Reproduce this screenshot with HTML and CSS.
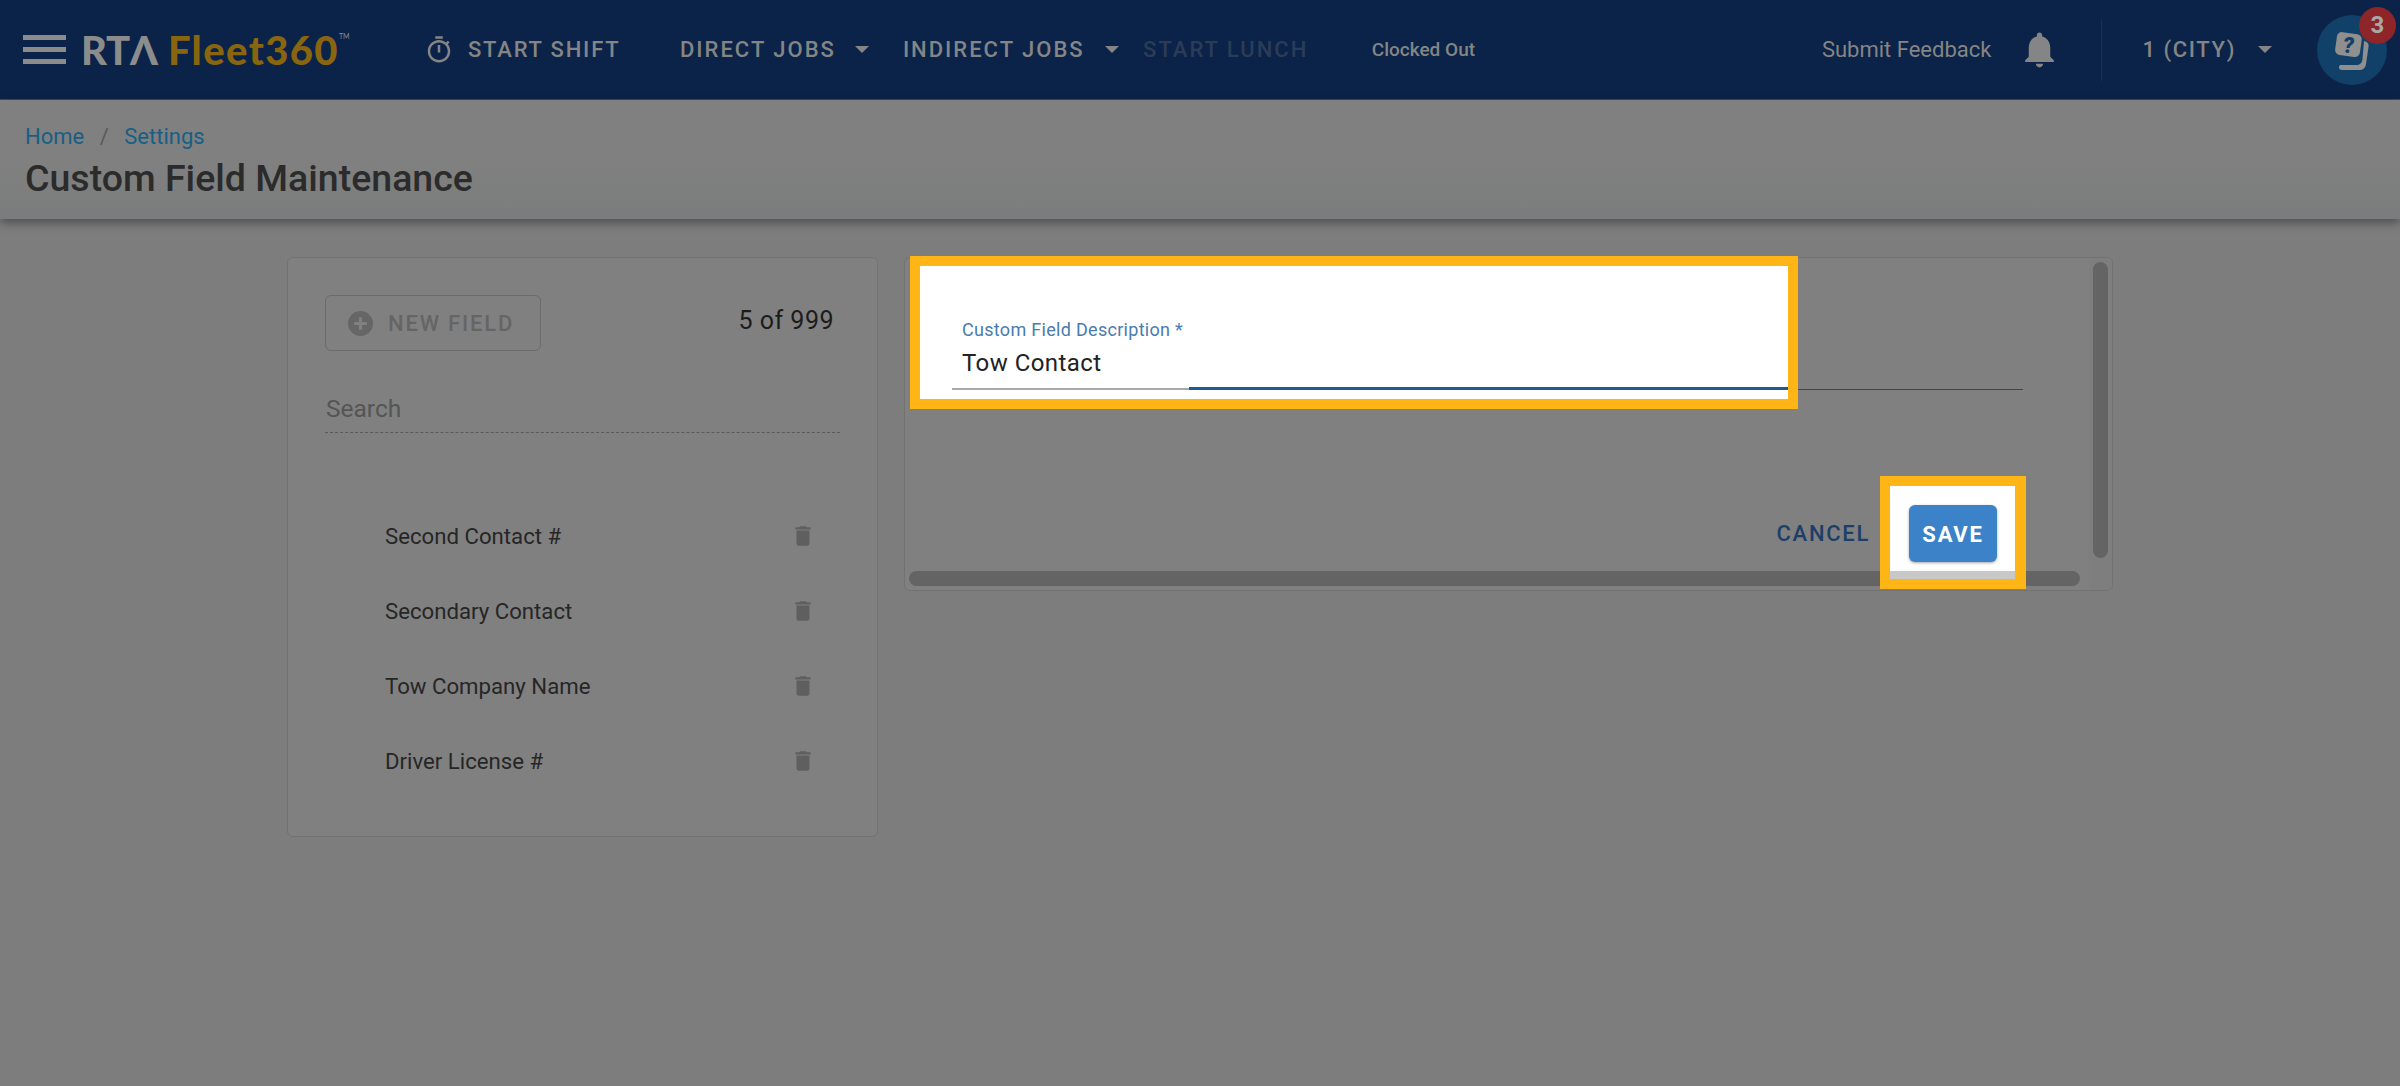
FILE: index.html
```html
<!DOCTYPE html>
<html lang="en">
<head>
<meta charset="utf-8">
<title>Custom Field Maintenance</title>
<link rel="stylesheet" href="styles.css">
</head>
<body>
<header class="topbar">
  <div class="burger"><span></span><span></span><span></span></div>
  <div class="logo"><span class="logo-rta">RTΛ</span><span class="logo-fleet">Fleet360</span><span class="logo-tm">TM</span></div>
  <svg class="timer" viewBox="0 0 24 24"><path d="M15 1H9v2h6V1zm-4 13h2V8h-2v6zm8.03-6.61l1.42-1.42c-.43-.51-.9-.99-1.41-1.41l-1.42 1.42C16.07 4.74 14.12 4 12 4c-4.97 0-9 4.03-9 9s4.02 9 9 9 9-4.03 9-9c0-2.12-.74-4.07-1.97-5.61zM12 20c-3.87 0-7-3.13-7-7s3.13-7 7-7 7 3.13 7 7-3.13 7-7 7z"/></svg>
  <span class="nav nav-start">START SHIFT</span>
  <span class="nav nav-direct">DIRECT JOBS</span><i class="caret caret-direct"></i>
  <span class="nav nav-indirect">INDIRECT JOBS</span><i class="caret caret-indirect"></i>
  <span class="nav nav-lunch">START LUNCH</span>
  <span class="clocked">Clocked Out</span>
  <span class="feedback">Submit Feedback</span>
  <svg class="bell" viewBox="0 0 24 24"><path d="M12 22c1.1 0 2-.9 2-2h-4c0 1.1.9 2 2 2zm6-6v-5c0-3.07-1.63-5.64-4.5-6.32V4c0-.83-.67-1.5-1.5-1.5s-1.5.67-1.5 1.5v.68C7.64 5.36 6 7.92 6 11v5l-2 2v1h16v-1l-2-2z"/></svg>
  <span class="divider"></span>
  <span class="city">1 (CITY)</span><i class="caret caret-city"></i>
  <div class="help">
    <svg class="help-icon" viewBox="0 0 70 70">
      <path class="help-back" d="M47 26c4 1 5 3 4.500 6l-2.500 17c-.6 4-3 6-7 6H25c-3 0-4-3-2-5h16c4 0 6-2 6.500-6z"/>
      <rect class="help-front" x="19" y="18" width="25" height="23" rx="5" transform="rotate(8 31 29)"/>
      <text class="help-q" x="31.500" y="37.500">?</text>
    </svg>
    <span class="badge">3</span>
  </div>
</header>

<section class="subhead">
  <nav class="crumbs"><span class="crumb">Home</span><span class="slash">/</span><span class="crumb">Settings</span></nav>
  <h1 class="title">Custom Field Maintenance</h1>
</section>

<main class="content">
  <aside class="card list-card">
    <div class="list-top">
      <div class="new-field">
        <svg class="plus" viewBox="0 0 24 24"><circle cx="12" cy="12" r="12"/><path class="plus-mark" d="M10.500 6h3v4.500H18v3h-4.500V18h-3v-4.500H6v-3h4.500z"/></svg>
        <span>NEW FIELD</span>
      </div>
      <span class="count">5 of 999</span>
    </div>
    <div class="search">Search</div>
    <ul class="rows">
      <li class="row"><span>Second Contact #</span><svg class="trash" viewBox="0 0 24 24"><path d="M6 19c0 1.100.9 2 2 2h8c1.100 0 2-.9 2-2V7H6v12zM19 4h-3.500l-1-1h-5l-1 1H5v2h14V4z"/></svg></li>
      <li class="row"><span>Secondary Contact</span><svg class="trash" viewBox="0 0 24 24"><path d="M6 19c0 1.100.9 2 2 2h8c1.100 0 2-.9 2-2V7H6v12zM19 4h-3.500l-1-1h-5l-1 1H5v2h14V4z"/></svg></li>
      <li class="row"><span>Tow Company Name</span><svg class="trash" viewBox="0 0 24 24"><path d="M6 19c0 1.100.9 2 2 2h8c1.100 0 2-.9 2-2V7H6v12zM19 4h-3.500l-1-1h-5l-1 1H5v2h14V4z"/></svg></li>
      <li class="row"><span>Driver License #</span><svg class="trash" viewBox="0 0 24 24"><path d="M6 19c0 1.100.9 2 2 2h8c1.100 0 2-.9 2-2V7H6v12zM19 4h-3.500l-1-1h-5l-1 1H5v2h14V4z"/></svg></li>
    </ul>
  </aside>

  <section class="card form-card">
    <div class="field-line"></div>
    <div class="actions"><span class="cancel">CANCEL</span></div>
    <div class="scroll-corner"></div>
    <div class="scroll-v"></div>
    <div class="scroll-h"></div>
  </section>
</main>

<div class="spot spot-field">
  <div class="spot-label">Custom Field Description *</div>
  <div class="spot-value">Tow Contact</div>
  <div class="spot-underline"><span class="line-gray"></span><span class="line-blue"></span></div>
</div>

<div class="spot spot-save">
  <div class="save-area"><span class="save">SAVE</span></div>
  <div class="save-strip"></div>
</div>
</body>
</html>
```
FILE: styles.css
```css
* { box-sizing: border-box; }
html, body { margin: 0; padding: 0; }
body {
  width: 2400px;
  height: 1086px;
  overflow: hidden;
  position: relative;
  background: #7d7d7d;
  font-family: Roboto, "Liberation Sans", sans-serif;
}

/* top bar */
.topbar {
  height: 100px;
  background: #0b2348;
  display: flex;
  align-items: center;
  padding-right: 13px;
  border-bottom: 1px solid #3c4a5e;
}
.burger { margin-left: 23px; width: 43px; display: flex; flex-direction: column; gap: 7px; }
.burger span { height: 5px; background: #8b8b8b; }
.logo { margin-left: 15px; display: flex; align-items: baseline; font-family: Lato, Roboto, sans-serif; font-weight: 900; font-size: 40px; line-height: 40px; width: 265px; flex: none; }
.logo-rta { color: #8c8c8c; letter-spacing: -.2px; }
.logo-fleet { color: #8a650f; margin-left: 10px; letter-spacing: 1.4px; }
.logo-tm { color: #8c8c8c; font-size: 7px; line-height: 7px; align-self: flex-start; margin-top: 3px; font-weight: 400; }
.timer { width: 30px; height: 30px; margin-left: 78px; fill: #858585; flex: none; }
.nav { font-size: 22px; font-weight: 500; letter-spacing: 2px; color: #858585; white-space: nowrap; line-height: 30px; }
.nav-start { margin-left: 14px; letter-spacing: 1.8px; }
.nav-direct { margin-left: 59.5px; }
.nav-indirect { margin-left: 34px; }
.nav-lunch { margin-left: 24px; color: #2b3c58; }
.caret { width: 0; height: 0; border-left: 7px solid transparent; border-right: 7px solid transparent; border-top: 7px solid #858585; flex: none; }
.caret-direct { margin-left: 19px; }
.caret-indirect { margin-left: 20.5px; }
.clocked { margin-left: 63.5px; font-size: 19px; font-weight: 500; color: #858585; line-height: 24px; white-space: nowrap; }
.feedback { margin-left: auto; font-size: 22px; color: #858585; line-height: 30px; white-space: nowrap; }
.bell { width: 43px; height: 43px; margin-left: 27px; fill: #858585; flex: none; }
.divider { width: 1px; height: 62px; background: #19304f; margin-left: 40px; flex: none; }
.city { margin-left: 40px; font-size: 22px; font-weight: 500; letter-spacing: 1.6px; color: #858585; line-height: 30px; white-space: nowrap; }
.caret-city { margin-left: 22px; }
.help { position: relative; width: 70px; height: 70px; margin-left: 45px; border-radius: 50%; background: #114068; flex: none; }
.help-icon { width: 70px; height: 70px; display: block; }
.help-front, .help-back { fill: #8f8f8f; }
.help-q { font-family: Roboto, sans-serif; font-weight: 900; font-style: italic; font-size: 22px; fill: #114068; text-anchor: middle; }
.badge { position: absolute; top: -8px; right: -9px; width: 37px; height: 37px; border-radius: 50%; background: #8e2528; color: #a8a8a8; font-size: 24px; font-weight: 700; line-height: 37px; text-align: center; }

/* page title band */
.subhead {
  height: 119px;
  background: linear-gradient(#808080 55%, #7b7c7d);
  padding: 23px 25px 0;
  box-shadow: 0 4px 9px rgba(0,0,0,.36);
  position: relative;
}
.crumbs { display: flex; align-items: center; font-size: 22px; line-height: 28px; }
.crumb { color: #175f85; }
.slash { color: #5a5a5a; margin: 0 15.5px; }
.title { margin: 4px 0 0; font-size: 37.5px; font-weight: 500; line-height: 46px; color: #2b2b2b; }

/* cards */
.content { display: flex; justify-content: center; align-items: flex-start; gap: 26px; padding-top: 38px; }
.card { background: #808080; border: 1px solid #727272; border-radius: 6px; }
.list-card { width: 591px; height: 580px; padding: 37px; }
.list-top { display: flex; justify-content: space-between; align-items: flex-start; }
.new-field { width: 216px; height: 56px; border: 1.5px solid #6b6b6b; border-radius: 6px; display: flex; align-items: center; padding-left: 22px; gap: 15px; color: #656565; font-size: 22px; font-weight: 500; letter-spacing: 1.8px; }
.plus { width: 25px; height: 25px; fill: #666; flex: none; }
.plus-mark { fill: #808080; }
.count { font-size: 25px; line-height: 52px; color: #1c1c1c; margin-right: 6px; letter-spacing: .5px; }
.search { margin-top: 42px; height: 40px; padding-left: 1px; border-bottom: 1px dashed #5a5a5a; font-size: 24.5px; line-height: 32px; color: #555; }
.rows { list-style: none; margin: 65px 0 0; padding: 0 24px 0 60px; }
.row { height: 75px; display: flex; align-items: center; justify-content: space-between; font-size: 22.2px; color: #262626; }
.trash { width: 26px; height: 26px; fill: #5f5f5f; flex: none; }

.form-card { position: relative; width: 1209px; height: 334px; padding: 131px 242px 0 47px; overflow: hidden; }
.field-line { height: 1px; margin-right: -153px; background: #454545; }
.actions { margin-top: 129px; display: flex; justify-content: flex-end; }
.cancel { font-size: 22px; font-weight: 500; letter-spacing: 1.7px; line-height: 30px; color: #1c3f69; white-space: nowrap; }
.scroll-corner { position: absolute; right: 0; top: 0; bottom: 0; width: 23px; background: #7e7e7e; }
.scroll-v { position: absolute; right: 4px; top: 4px; width: 15px; height: 296px; border-radius: 8px; background: #646464; }
.scroll-h { position: absolute; left: 4px; bottom: 4px; height: 15px; width: 1171px; border-radius: 8px; background: #646464; }

/* highlighted callouts above the dimmed page */
.spot { position: absolute; background: #fff; border: 10px solid #ffb515; }
.spot-field { left: 910px; top: 256px; width: 888px; height: 153px; padding-top: 53px; }
.spot-label { margin-left: 42px; font-size: 18px; line-height: 22px; letter-spacing: .3px; color: #4a7cae; }
.spot-value { margin: 7px 0 9px 42px; font-size: 24px; line-height: 30px; letter-spacing: .45px; color: #222; }
.spot-underline { margin-left: 32px; display: flex; align-items: flex-end; height: 3px; }
.line-gray { width: 237px; height: 2px; background: #a9a9a9; }
.line-blue { flex: 1; height: 3px; background: #1f5a93; }
.spot-save { left: 1880px; top: 476px; width: 146px; height: 113px; border-right-width: 11px; display: flex; flex-direction: column; }
.save-area { flex: 1; padding: 19px 0 0 19px; }
.save { display: block; width: 88px; height: 57px; border-radius: 6px; background: #3b82c9; color: #fff; font-size: 22px; font-weight: 700; letter-spacing: 1.8px; line-height: 59px; text-align: center; box-shadow: 0 1px 3px rgba(0,0,0,.35); }
.save-strip { height: 8px; background: #c8c8c8; flex: none; }
```
